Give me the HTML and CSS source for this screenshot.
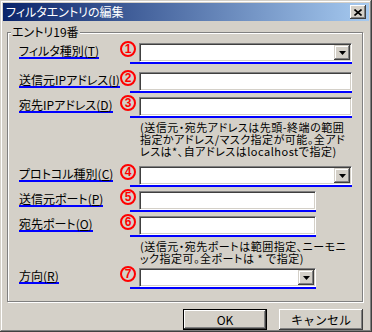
FILE: index.html
```html
<!DOCTYPE html>
<html lang="ja">
  <head>
    <meta charset="UTF-8" />
    <title>フィルタエントリの編集</title>
    <link rel="stylesheet" href="styles.css">
  </head>

  <body>
    <div class="window">
      <div class="titlebar">
        <span class="title">フィルタエントリの編集</span>
        <span class="close">
          <svg width="8" height="7" viewBox="0 0 8 7"><path d="M0.5 0.5L7.5 6.5M7.5 0.5L0.5 6.5" stroke="#000" stroke-width="1.6" /></svg>
        </span>
      </div>

      <div class="group">
        <span class="caption">エントリ19番</span>

        <div class="row">
          <label class="lbl"><span>フィルタ種別(<u>T</u>)</span></label>
          <div class="ctl">
            <span class="num">1</span>
            <div class="field combo"><span class="drop"><svg width="7" height="4" viewBox="0 0 7 4"><path d="M0 0H7L3.5 4Z" /></svg></span></div>
          </div>
        </div>

        <div class="row r2">
          <label class="lbl"><span>送信元IPアドレス(<u>I</u>)</span></label>
          <div class="ctl">
            <span class="num">2</span>
            <div class="field"></div>
          </div>
        </div>

        <div class="row">
          <label class="lbl"><span>宛先IPアドレス(<u>D</u>)</span></label>
          <div class="ctl">
            <span class="num">3</span>
            <div class="field"></div>
          </div>
        </div>

        <p class="note">
          <span>(送信元・宛先アドレスは先頭-終端の範囲</span>
          <span>指定かアドレス/マスク指定が可能。全アド</span>
          <span>レスは*、自アドレスはlocalhostで指定)</span>
        </p>

        <div class="row r4">
          <label class="lbl"><span>プロトコル種別(<u>C</u>)</span></label>
          <div class="ctl">
            <span class="num">4</span>
            <div class="field combo"><span class="drop"><svg width="7" height="4" viewBox="0 0 7 4"><path d="M0 0H7L3.5 4Z" /></svg></span></div>
          </div>
        </div>

        <div class="row">
          <label class="lbl"><span>送信元ポート(<u>P</u>)</span></label>
          <div class="ctl short">
            <span class="num">5</span>
            <div class="field"></div>
          </div>
        </div>

        <div class="row">
          <label class="lbl"><span>宛先ポート(<u>O</u>)</span></label>
          <div class="ctl short">
            <span class="num">6</span>
            <div class="field"></div>
          </div>
        </div>

        <p class="note">
          <span>(送信元・宛先ポートは範囲指定、ニーモニ</span>
          <span>ック指定可。全ポートは * で指定)</span>
        </p>

        <div class="row">
          <label class="lbl"><span>方向(<u>R</u>)</span></label>
          <div class="ctl short">
            <span class="num">7</span>
            <div class="field combo"><span class="drop"><svg width="7" height="4" viewBox="0 0 7 4"><path d="M0 0H7L3.5 4Z" /></svg></span></div>
          </div>
        </div>
      </div>

      <div class="buttons">
        <button class="default">OK</button>
        <button>キャンセル</button>
      </div>
    </div>
  </body>
</html>
```

FILE: styles.css
```css
* {
  margin: 0;
  padding: 0;
  box-sizing: border-box;
}
body {
  background-color: #d4d0c8;
  font-family: "Noto Sans CJK JP", sans-serif;
  font-size: 12px;
  font-feature-settings: "palt";
  color: #000;
}

.window {
  width: 372px;
  height: 332px;
  padding: 3px;
  box-shadow: inset -1px -1px #404040, inset 1px 1px #d4d0c8,
    inset -2px -2px #808080, inset 2px 2px #fff;
}

.titlebar {
  height: 18px;
  display: flex;
  align-items: center;
  justify-content: space-between;
  padding: 0 3px 0 3px;
  background: linear-gradient(to right, #0a246a, #a6caf0);
  color: #fff;
}
.title {
  line-height: 18px;
}
.close {
  width: 16px;
  height: 14px;
  display: flex;
  align-items: center;
  justify-content: center;
  background-color: #d4d0c8;
  box-shadow: inset -1px -1px #404040, inset 1px 1px #fff,
    inset -2px -2px #808080;
}
.close svg {
  display: block;
}

/* group box */
.group {
  position: relative;
  margin: 11px 6px 0 4px;
  padding: 9px 10px 12px 11px;
  border: 1px solid #808080;
  box-shadow: inset 1px 1px #fff, 1px 1px #fff;
}
.caption {
  position: absolute;
  top: -8px;
  left: 3px;
  padding: 0 1px;
  line-height: 14px;
  background-color: #d4d0c8;
}

.row {
  display: flex;
  align-items: flex-end;
  margin-top: 3px;
}
.row:first-of-type {
  margin-top: 0;
}
.r2 {
  margin-top: 7px;
}
.r4 {
  margin-top: 8px;
}

.lbl {
  width: 101px;
  margin-bottom: 5px;
}
.lbl span {
  display: inline-block;
  line-height: 13px;
  border-bottom: 2px solid #0000ff;
}

.ctl {
  display: flex;
  padding-bottom: 2px;
  background: linear-gradient(#0000ff, #0000ff) right bottom / calc(100% - 10px) 2px no-repeat;
}
.num {
  width: 16px;
  height: 16px;
  margin: -2px 3px 0 0;
  align-self: flex-start;
  border: 2px solid #ff0000;
  border-radius: 50%;
  color: #ff0000;
  font: bold 12px/12px "Liberation Sans", sans-serif;
  text-align: center;
}

.field {
  width: 213px;
  height: 19px;
  background-color: #fff;
  border: 1px solid;
  border-color: #808080 #fff #fff #808080;
  box-shadow: inset 1px 1px #404040, inset -1px -1px #d4d0c8;
}
.short .field {
  width: 177px;
}
.combo {
  display: flex;
  justify-content: flex-end;
  padding: 1px;
}
.drop {
  width: 16px;
  display: flex;
  align-items: center;
  justify-content: center;
  background-color: #d4d0c8;
  box-shadow: inset -1px -1px #404040, inset 1px 1px #d4d0c8,
    inset -2px -2px #808080, inset 2px 2px #fff;
}
.drop svg {
  display: block;
}

.note {
  margin: 3px 0 0 121px;
  font-size: 11px;
  letter-spacing: 0.5px;
  white-space: nowrap;
}
.note span {
  display: block;
  height: 12px;
  line-height: 12px;
}

.buttons {
  display: flex;
  justify-content: flex-end;
  gap: 12px;
  margin-top: 7px;
  padding-right: 6px;
}
button {
  width: 84px;
  height: 21px;
  border: none;
  background-color: #d4d0c8;
  font-family: "Noto Sans CJK JP", sans-serif;
  font-size: 12px;
  color: #000;
  box-shadow: inset -1px -1px #404040, inset 1px 1px #fff,
    inset -2px -2px #808080;
}
button.default {
  border: 1px solid #000;
}
```
